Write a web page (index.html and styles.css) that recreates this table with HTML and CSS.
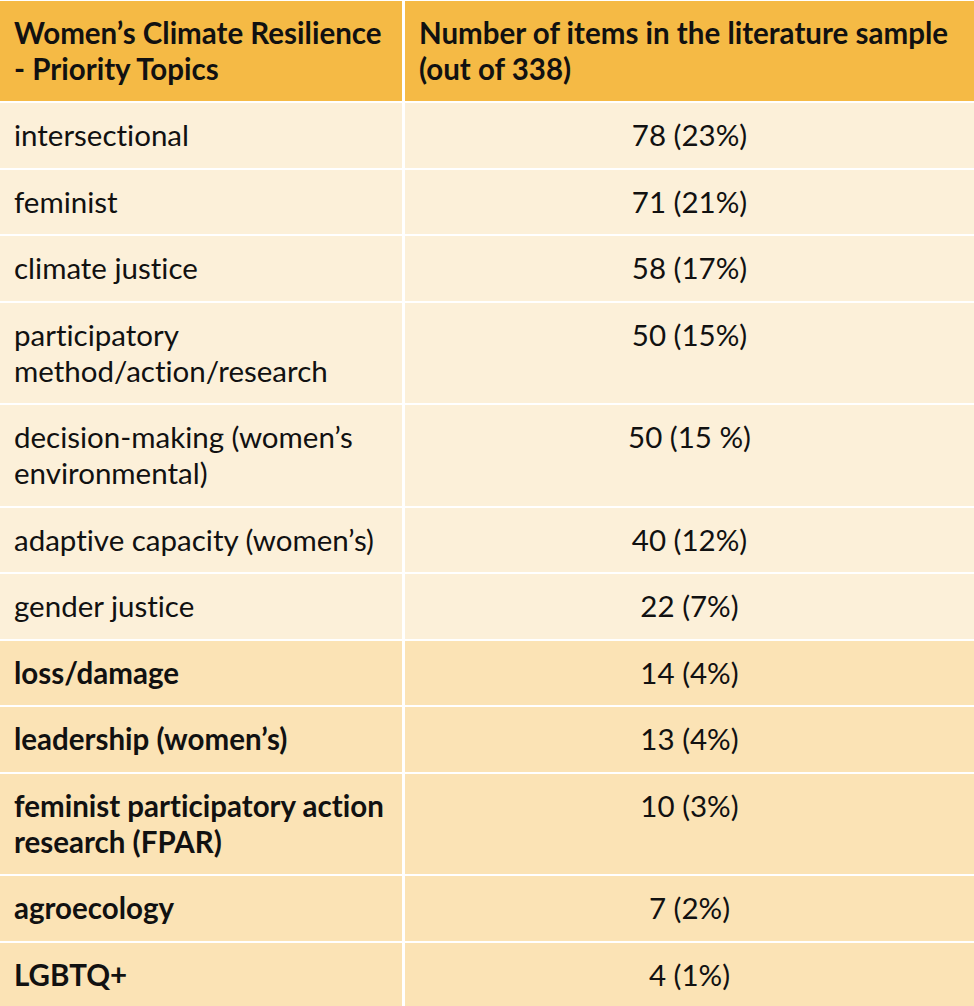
FILE: index.html
```html
<!DOCTYPE html>
<html lang="en">
<head>
<meta charset="utf-8">
<title>Women's Climate Resilience - Priority Topics</title>
<link rel="stylesheet" href="styles.css">
</head>
<body>
<table class="topics">
  <colgroup><col class="col-topic"><col class="col-count"></colgroup>
  <thead>
    <tr>
      <th class="topic">Women’s Climate Resilience - Priority Topics</th>
      <th class="count-head">Number of items in the literature sample (out of 338)</th>
    </tr>
  </thead>
  <tbody>
    <tr class="light"><td class="topic">intersectional</td><td class="count">78 (23%)</td></tr>
    <tr class="light"><td class="topic">feminist</td><td class="count">71 (21%)</td></tr>
    <tr class="light"><td class="topic">climate justice</td><td class="count">58 (17%)</td></tr>
    <tr class="light"><td class="topic">participatory method/action/research</td><td class="count">50 (15%)</td></tr>
    <tr class="light"><td class="topic">decision-making (women’s environmental)</td><td class="count">50 (15 %)</td></tr>
    <tr class="light"><td class="topic">adaptive capacity (women’s)</td><td class="count">40 (12%)</td></tr>
    <tr class="light"><td class="topic">gender justice</td><td class="count">22 (7%)</td></tr>
    <tr class="dark"><td class="topic">loss/damage</td><td class="count">14 (4%)</td></tr>
    <tr class="dark"><td class="topic">leadership (women’s)</td><td class="count">13 (4%)</td></tr>
    <tr class="dark"><td class="topic">feminist participatory action research (FPAR)</td><td class="count">10 (3%)</td></tr>
    <tr class="dark"><td class="topic">agroecology</td><td class="count">7 (2%)</td></tr>
    <tr class="dark"><td class="topic">LGBTQ+</td><td class="count">4 (1%)</td></tr>
  </tbody>
</table>
</body>
</html>
```
FILE: styles.css
```css
html, body {
  margin: 0;
  padding: 0;
  background: #ffffff;
}

body {
  font-family: Lato, "Open Sans", "Liberation Sans", sans-serif;
  color: #111111;
}

.topics {
  width: 974px;
  border-collapse: separate;
  border-spacing: 0;
  border-top: 1px solid #ffffff;
  table-layout: fixed;
}

.col-topic { width: 405px; }
.col-count { width: 569px; }

.topics th,
.topics td {
  font-size: 29.5px;
  line-height: 36px;
  padding: 14px 14px 14.5px 14px;
  vertical-align: top;
  border-bottom: 2px solid #ffffff;
  font-variant-ligatures: no-common-ligatures;
}

.topics th {
  background: #F5BA45;
  font-weight: 700;
  text-align: left;
  padding-bottom: 14px;
}

.topics .topic {
  border-right: 3px solid #ffffff;
}

.light td { background: #FCF0D9; }
.dark td { background: #FBE3B5; }

.dark .topic { font-weight: 700; }

.count {
  text-align: center;
}

.topics tbody tr:last-child td {
  border-bottom: 0;
}
```
